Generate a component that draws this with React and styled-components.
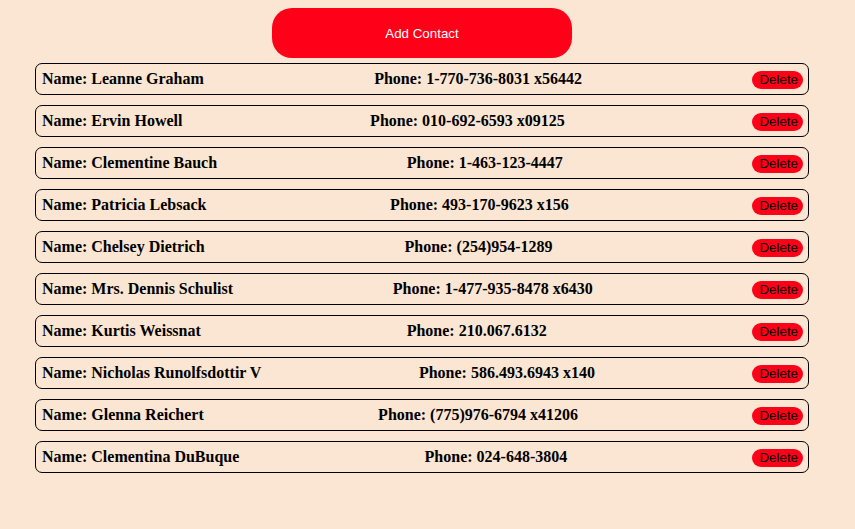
import styled, { createGlobalStyle } from 'styled-components';

const GlobalStyle = createGlobalStyle`
  body {
    margin: 0;
    background-color: #fae6d3;
    font-family: "Liberation Serif", "Times New Roman", serif;
  }
`;

const Page = styled.div`
  width: 774px;
  padding: 8px 0 0 35px;
`;

const AddButton = styled.button`
  display: block;
  width: 300px;
  height: 50px;
  margin: 0 0 5px 237px;
  background-color: #ff0019;
  color: white;
  border: none;
  border-radius: 20px;
  font-family: "Liberation Sans", Arial, sans-serif;
  font-size: 13.33px;
  cursor: pointer;
`;

const List = styled.div`
  display: flex;
  flex-direction: column;
  gap: 10px;
`;

const Row = styled.div`
  display: flex;
  justify-content: space-between;
  align-items: center;
  height: 32px;
  box-sizing: border-box;
  padding: 0 5px 0 6px;
  border: 1px solid #000;
  border-radius: 7px;
`;

const Field = styled.span`
  font-size: 16px;
  font-weight: bold;
  color: #000;
`;

const DeleteButton = styled.button`
  height: 18px;
  margin-top: 2px;
  padding: 0 5px 0 7px;
  background-color: #ff0019;
  color: #000;
  border: none;
  border-radius: 9px;
  font-family: "Liberation Sans", Arial, sans-serif;
  font-size: 13.33px;
  line-height: 18px;
  cursor: pointer;
`;

const contacts = [
  { id: 1, name: 'Leanne Graham', phone: '1-770-736-8031 x56442' },
  { id: 2, name: 'Ervin Howell', phone: '010-692-6593 x09125' },
  { id: 3, name: 'Clementine Bauch', phone: '1-463-123-4447' },
  { id: 4, name: 'Patricia Lebsack', phone: '493-170-9623 x156' },
  { id: 5, name: 'Chelsey Dietrich', phone: '(254)954-1289' },
  { id: 6, name: 'Mrs. Dennis Schulist', phone: '1-477-935-8478 x6430' },
  { id: 7, name: 'Kurtis Weissnat', phone: '210.067.6132' },
  { id: 8, name: 'Nicholas Runolfsdottir V', phone: '586.493.6943 x140' },
  { id: 9, name: 'Glenna Reichert', phone: '(775)976-6794 x41206' },
  { id: 10, name: 'Clementina DuBuque', phone: '024-648-3804' }
];

function App() {
  return (
    <>
      <GlobalStyle />
      <Page>
        <AddButton>Add Contact</AddButton>
        <List>
          {contacts.map(contact => (
            <Row key={contact.id}>
              <Field>Name: {contact.name}</Field>
              <Field>Phone: {contact.phone}</Field>
              <DeleteButton>Delete</DeleteButton>
            </Row>
          ))}
        </List>
      </Page>
    </>
  );
}

export default App;
